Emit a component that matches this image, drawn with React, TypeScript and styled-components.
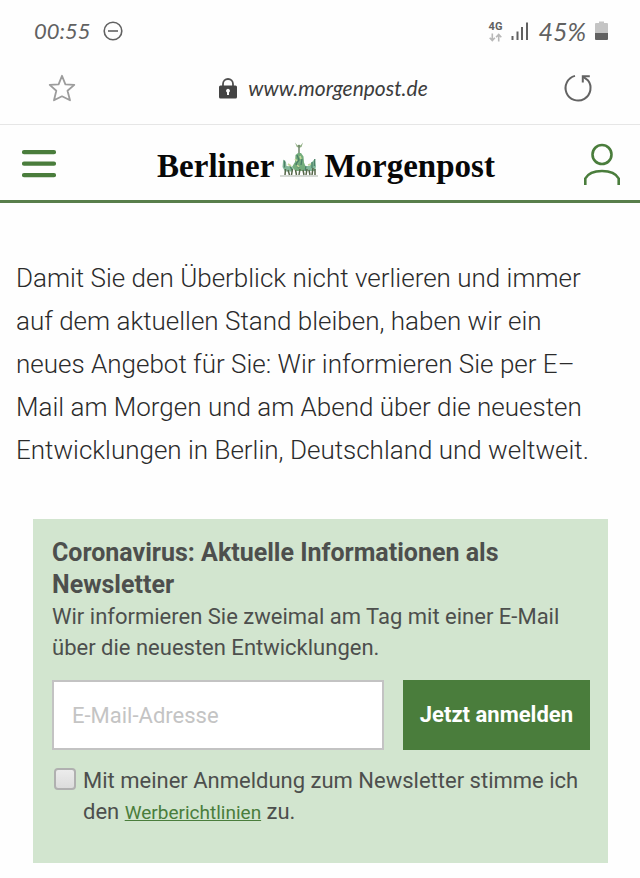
import React from "react";
import styled, { createGlobalStyle } from "styled-components";

const green = "#4a7d3c";

const GlobalStyle = createGlobalStyle`
  *, *::before, *::after { box-sizing: border-box; }
  body { margin: 0; background: #fefefe; font-family: Roboto, sans-serif; color: #4d4f4d; }
  p, h1, h2 { margin: 0; }
  svg { display: block; flex: none; }
`;

const StatusBar = styled.div`
  display: flex;
  align-items: center;
  justify-content: space-between;
  height: 62px;
  padding: 0 32px 0 34px;
  color: #616161;
`;

const StatusGroup = styled.div<{ $gap: number }>`
  display: flex;
  align-items: center;
  gap: ${(p) => p.$gap}px;
`;

const StatusText = styled.span<{ $size: number }>`
  font: italic ${(p) => p.$size}px/28px Lato, sans-serif;
`;

const Network = styled.div`
  display: flex;
  flex-direction: column;
  align-items: center;
  font-size: 11px;
  line-height: 12px;
  font-weight: 700;
`;

const AddressBar = styled.div`
  display: flex;
  align-items: center;
  justify-content: space-between;
  height: 63px;
  padding: 0 47px 10px 48px;
  border-bottom: 1px solid #e6e6e6;
`;

const IconButton = styled.button<{ $padRight?: number }>`
  display: flex;
  padding: 0 ${(p) => p.$padRight ?? 0}px 0 0;
  border: 0;
  background: none;
  color: inherit;
  cursor: pointer;
`;

const Address = styled.div`
  display: flex;
  align-items: center;
  gap: 11px;
  color: #3c3c3c;
  font: italic 21px/28px Lato, sans-serif;
`;

const SiteHeader = styled.header`
  display: flex;
  align-items: center;
  justify-content: space-between;
  height: 78px;
  padding: 3px 18px 0 20px;
  border-bottom: 3px solid #587e4b;
  color: ${green};
`;

const Logo = styled.a`
  display: flex;
  align-items: baseline;
  gap: 6px;
  color: #080808;
  font: bold 33px/44px "Liberation Serif", serif;
  text-decoration: none;
`;

const Intro = styled.p`
  padding: 54px 32px 0 16px;
  font-size: 26px;
  line-height: 43px;
  font-weight: 300;
  color: #2b2b2b;
`;

const Panel = styled.section`
  margin: 47px 32px 14px 33px;
  padding: 18px 18px 35px 19px;
  background: #d2e5cf;
`;

const PanelTitle = styled.h2`
  font-size: 25px;
  line-height: 32px;
  font-weight: 700;
`;

const PanelText = styled.p`
  font-size: 22px;
  line-height: 31px;
`;

const SignupRow = styled.div`
  display: flex;
  gap: 19px;
  margin: 17px 0 15px;
`;

const EmailInput = styled.input`
  flex: 1;
  min-width: 0;
  height: 70px;
  padding: 0 18px;
  border: 2px solid #c3c3c3;
  border-radius: 0;
  background: #fff;
  font: 22px/30px Roboto, sans-serif;
  color: #4d4f4d;
  &::placeholder { color: #c4c4c4; opacity: 1; }
`;

const SubmitButton = styled.button`
  padding: 0 17px;
  border: 0;
  background: ${green};
  color: #fff;
  font: 700 22px/30px Roboto, sans-serif;
  white-space: nowrap;
`;

const Consent = styled.div`
  display: flex;
  align-items: flex-start;
  gap: 7px;
  padding-left: 2px;
  font-size: 22px;
  line-height: 31px;
`;

const Checkbox = styled.input`
  appearance: none;
  flex: none;
  width: 22px;
  height: 22px;
  margin: 3px 0 0;
  border: 2px solid #b0b0b0;
  border-radius: 4px;
  background: linear-gradient(#ececec, #dcdcdc);
  &:checked { background: ${green}; }
`;

const TextLink = styled.a`
  font-size: 19px;
  color: ${green};
  text-decoration: underline;
`;

const DoNotDisturbIcon = () => (
  <svg width="20" height="20" viewBox="0 0 20 20" fill="none" stroke="currentColor" strokeWidth="1.6">
    <circle cx="10" cy="10" r="8.8" />
    <path d="M5 10h10" />
  </svg>
);

const DataArrowsIcon = () => (
  <svg width="13" height="9" viewBox="0 0 13 9" fill="none" stroke="#b8b8b8" strokeWidth="1.6">
    <path d="M3.3 0.5v7M0.7 4.8l2.6 2.7 2.6-2.7M9.7 8.5v-7M7.1 4.2l2.6-2.7 2.6 2.7" />
  </svg>
);

const SignalIcon = () => (
  <svg width="18" height="18" viewBox="0 0 18 18" fill="currentColor">
    <path d="M0.5 14h2v4h-2zM5.5 9.500h2v8.500h-2zM10 5h2v13h-2zM15 0.500h2v17.500h-2z" />
  </svg>
);

const BatteryIcon = () => (
  <svg width="13" height="20" viewBox="0 0 13 20">
    <path d="M4 2V0.500h5V2h3a1 1 0 0 1 1 1v9H0V3a1 1 0 0 1 1-1z" fill="#c4c4c4" />
    <path d="M0 12h13v6a1 1 0 0 1-1 1H1a1 1 0 0 1-1-1z" fill="currentColor" />
  </svg>
);

const StarIcon = () => (
  <svg width="28" height="28" viewBox="0 0 28 28" fill="none" stroke="#9c9c9c" strokeWidth="1.8" strokeLinejoin="round">
    <path d="M14 1.800 17.400 10.300 26.300 10.900 19.500 16.700 22 26.300 14 22.300 6 26.300 8.300 16.700 1.700 10.900 10.600 10.300z" />
  </svg>
);

const LockIcon = () => (
  <svg width="18" height="21" viewBox="0 0 18 21">
    <path d="M4 9V6a5 5 0 0 1 10 0v3" fill="none" stroke="#505050" strokeWidth="1.8" />
    <rect y="7.500" width="18" height="13" rx="1.500" fill="#444" />
    <path d="M9 10.800a2 2 0 0 1 1 3.700V17H8v-2.500a2 2 0 0 1 1-3.700z" fill="#fff" />
  </svg>
);

const ReloadIcon = () => (
  <svg width="30" height="30" viewBox="0 0 30 30" fill="none" stroke="#636363" strokeWidth="2">
    <path d="M12 2.900A12.500 12.500 0 1 0 24.800 7.200L20 3.600" />
    <path d="M19.800 9.500V3.200h7" />
  </svg>
);

const MenuIcon = () => (
  <svg width="38" height="30" viewBox="0 0 38 30" stroke={green} strokeWidth="4.200" strokeLinecap="round">
    <path d="M4 3.200h30M4 14.700h30M4 26.200h30" />
  </svg>
);

const UserIcon = () => (
  <svg width="40" height="44" viewBox="0 0 40 44" fill="none" stroke={green} strokeWidth="2.600">
    <circle cx="20" cy="12.500" r="9.500" />
    <path d="M3.300 43V36.500C6 31.500 12.500 29 20 29s14 2.500 16.700 7.500V43" />
  </svg>
);

const QuadrigaIcon = () => (
  <svg width="38" height="36" viewBox="0 0 38 36" fill="none">
    <path d="M0 35h38" stroke="#a9b1a8" strokeWidth="1" />
    <path d="M15 1.500l2.500 3 1.500-1 1.500 1L23 1.500 21.500 6l-2 .8L16.800 6z" fill="#8fae83" />
    <path d="M19 4v10" stroke="#6e8468" strokeWidth="1.500" />
    <path d="M18 12h3l2.500 3.500.5 6 2 5-2 3.500h-8.500l-3.500-4 3-5 .5-7z" fill="#74ad7c" />
    <path d="M3.200 18.500l2.800 2.500.5 4 5 .5 2 2-1 3H5L2.500 26zM34.800 18l-2.800 3-2 3.500-5 1-.5 4.500h10.500L36 25z" fill="#83b89a" />
    <path d="M4.500 19.500v7M10 25l2 4M17 14l2 5-3 4 3 4M22 18l-1 6M26 25l-1 5M32 21v6M34.800 18l-.5 7" stroke="#4b8067" strokeWidth="1.300" />
    <path d="M5.500 28l-.5 6M8 29l1.500 5M12.500 28l-1 6M15.500 29l1 5M20 28l-1 6M23 29l1 5M27 28l-1 6M29 29l1 5M33 27l-1 7M35 28v6" stroke="#566648" strokeWidth="1.500" />
    <path d="M15 18l2 2M20 15l1 3M8 23l3 2M28 24l3-1M17 24l2 2" stroke="#c6d89b" strokeWidth="1.600" />
  </svg>
);

export default function App() {
  return (
    <>
      <GlobalStyle />
      <StatusBar>
        <StatusGroup $gap={12}>
          <StatusText $size={22}>00:55</StatusText>
          <DoNotDisturbIcon />
        </StatusGroup>
        <StatusGroup $gap={9}>
          <Network>
            4G
            <DataArrowsIcon />
          </Network>
          <SignalIcon />
          <StatusText $size={25}>45%</StatusText>
          <BatteryIcon />
        </StatusGroup>
      </StatusBar>
      <AddressBar>
        <IconButton $padRight={8} aria-label="Lesezeichen"><StarIcon /></IconButton>
        <Address>
          <LockIcon />
          <span>www.morgenpost.de</span>
        </Address>
        <IconButton aria-label="Neu laden"><ReloadIcon /></IconButton>
      </AddressBar>
      <SiteHeader>
        <IconButton $padRight={12} aria-label="Menü"><MenuIcon /></IconButton>
        <Logo href="#">
          <span>Berliner</span>
          <QuadrigaIcon />
          <span>Morgenpost</span>
        </Logo>
        <IconButton aria-label="Anmelden"><UserIcon /></IconButton>
      </SiteHeader>
      <main>
        <Intro>
          Damit Sie den Überblick nicht verlieren und immer auf dem aktuellen Stand bleiben, haben wir ein neues
          Angebot für Sie: Wir informieren Sie per E–Mail am Morgen und am Abend über die neuesten Entwicklungen in
          Berlin, Deutschland und weltweit.
        </Intro>
        <Panel>
          <PanelTitle>Coronavirus: Aktuelle Informationen als Newsletter</PanelTitle>
          <PanelText>Wir informieren Sie zweimal am Tag mit einer E-Mail über die neuesten Entwicklungen.</PanelText>
          <form onSubmit={(e) => e.preventDefault()}>
            <SignupRow>
              <EmailInput type="email" placeholder="E-Mail-Adresse" aria-label="E-Mail-Adresse" />
              <SubmitButton type="submit">Jetzt anmelden</SubmitButton>
            </SignupRow>
            <Consent>
              <Checkbox type="checkbox" id="consent" />
              <label htmlFor="consent">
                Mit meiner Anmeldung zum Newsletter stimme ich den <TextLink href="#">Werberichtlinien</TextLink> zu.
              </label>
            </Consent>
          </form>
        </Panel>
      </main>
    </>
  );
}
